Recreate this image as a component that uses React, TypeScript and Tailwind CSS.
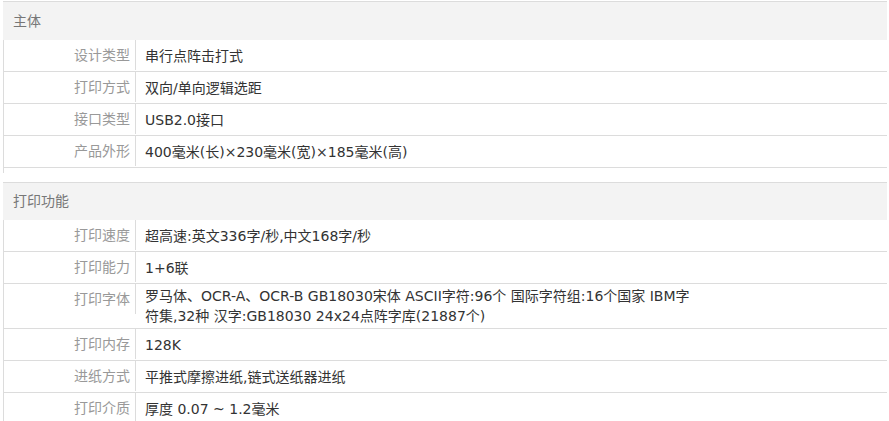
import React from "react";

interface SpecRow {
    label: string;
    value: string;
}

interface SpecSection {
    title: string;
    rows: SpecRow[];
}

const sections: SpecSection[] = [
    {
        title: "主体",
        rows: [
            { label: "设计类型", value: "串行点阵击打式" },
            { label: "打印方式", value: "双向/单向逻辑选距" },
            { label: "接口类型", value: "USB2.0接口" },
            { label: "产品外形", value: "400毫米(长)×230毫米(宽)×185毫米(高)" },
        ],
    },
    {
        title: "打印功能",
        rows: [
            { label: "打印速度", value: "超高速:英文336字/秒,中文168字/秒" },
            { label: "打印能力", value: "1+6联" },
            {
                label: "打印字体",
                value: "罗马体、OCR-A、OCR-B GB18030宋体 ASCII字符:96个 国际字符组:16个国家 IBM字符集,32种 汉字:GB18030 24x24点阵字库(21887个)",
            },
            { label: "打印内存", value: "128K" },
            { label: "进纸方式", value: "平推式摩擦进纸,链式送纸器进纸" },
            { label: "打印介质", value: "厚度 0.07 ~ 1.2毫米" },
        ],
    },
];

function Section({ section, first }: { section: SpecSection; first: boolean }) {
    return (
        <div className={first ? "mt-[1px]" : "mt-[9px]"}>
            <div
                className={`${first ? "h-[39px]" : "h-[38px]"} border-t border-[#dcdcdc] bg-[#f3f3f3] pl-[10px] flex items-center text-[14px] text-[#777]`}
            >
                {section.title}
            </div>
            {section.rows.map((row) => (
                <div key={row.label} className="flex border-l border-b border-[#dcdcdc] min-h-[32px]">
                    <div className="w-[132px] shrink-0 h-[30px] leading-[30px] border-r border-[#dcdcdc] text-right pr-[5px] text-[14px] text-[#999]">
                        {row.label}
                    </div>
                    <div className="self-center w-[556px] pl-[9px] py-[2px] text-[14px] leading-[20px] text-[#333]">
                        {row.value}
                    </div>
                </div>
            ))}
            {first && <div className="h-[5px] border-l border-[#dcdcdc]" />}
        </div>
    );
}

export default function App() {
    return (
        <div
            className="w-[884px] ml-[3px] bg-white"
            style={{ fontFamily: '"DejaVu Sans", "Noto Sans CJK SC", sans-serif' }}
        >
            {sections.map((s, i) => (
                <Section key={s.title} section={s} first={i === 0} />
            ))}
        </div>
    );
}
